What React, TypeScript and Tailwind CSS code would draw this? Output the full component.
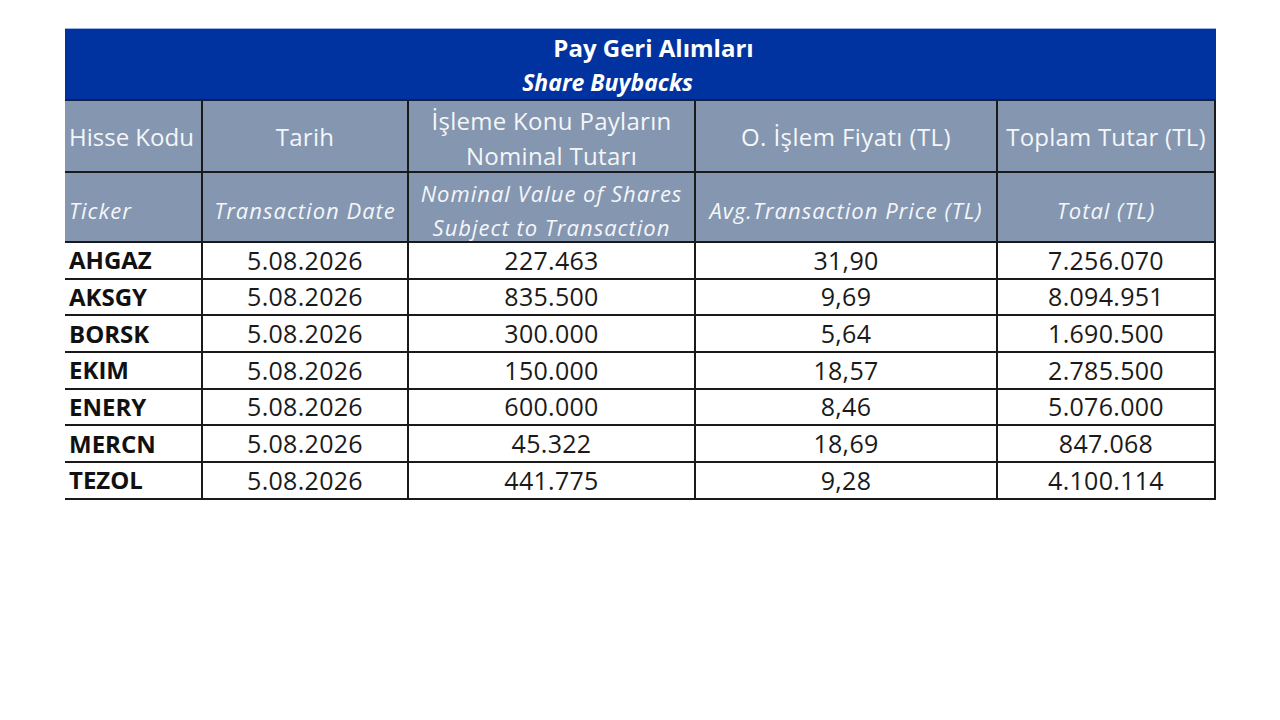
import React from "react";

const rows: [string, string, string, string, string][] = [
  ["AHGAZ", "5.08.2026", "227.463", "31,90", "7.256.070"],
  ["AKSGY", "5.08.2026", "835.500", "9,69", "8.094.951"],
  ["BORSK", "5.08.2026", "300.000", "5,64", "1.690.500"],
  ["EKIM", "5.08.2026", "150.000", "18,57", "2.785.500"],
  ["ENERY", "5.08.2026", "600.000", "8,46", "5.076.000"],
  ["MERCN", "5.08.2026", "45.322", "18,69", "847.068"],
  ["TEZOL", "5.08.2026", "441.775", "9,28", "4.100.114"],
];

const font = { fontFamily: "'Open Sans', 'Noto Sans', sans-serif" };

export default function App() {
  return (
    <div className="w-[1280px] h-[720px] bg-white pt-[28px] pl-[65px]" style={font}>
      <div className="w-[1151px]">
        <div className="h-[73px] bg-[#0033a0] border-t border-[#9db3e0] border-b-2 border-b-[#14204a] flex flex-col items-center text-white font-bold leading-none">
          <div className="mt-[7px] pl-[26px] text-[24px]">Pay Geri Alımları</div>
          <div className="mt-[11px] pr-[66px] italic text-[23px]">Share Buybacks</div>
        </div>
        <div className="grid grid-cols-[138px_206px_287px_302px_218px] text-[#f4f6f9]">
          <div className="h-[72px] bg-[#8496b0] border-r-2 border-b-2 border-[#1a1a1a] flex items-center pl-[4px] pt-[2px] text-[24px]">Hisse Kodu</div>
          <div className="h-[72px] bg-[#8496b0] border-r-2 border-b-2 border-[#1a1a1a] flex items-center justify-center pt-[2px] text-[24px] tracking-[0.3px]">Tarih</div>
          <div className="h-[72px] bg-[#8496b0] border-r-2 border-b-2 border-[#1a1a1a] flex flex-col items-center justify-center pt-[4px] text-[24px] tracking-[0.3px] leading-[35px]">
            <div>İşleme Konu Payların</div>
            <div>Nominal Tutarı</div>
          </div>
          <div className="h-[72px] bg-[#8496b0] border-r-2 border-b-2 border-[#1a1a1a] flex items-center justify-center pt-[2px] text-[24px] tracking-[0.4px]">O. İşlem Fiyatı (TL)</div>
          <div className="h-[72px] bg-[#8496b0] border-r-2 border-b-2 border-[#1a1a1a] flex items-center justify-center pt-[2px] text-[24px] tracking-[0.2px]">Toplam Tutar (TL)</div>

          <div className="h-[70px] bg-[#8496b0] border-r-2 border-b-2 border-[#1a1a1a] flex items-center pl-[4px] pt-[6px] text-[22px] italic tracking-[1px]">Ticker</div>
          <div className="h-[70px] bg-[#8496b0] border-r-2 border-b-2 border-[#1a1a1a] flex items-center justify-center pt-[6px] text-[22px] italic tracking-[1px]">Transaction Date</div>
          <div className="h-[70px] bg-[#8496b0] border-r-2 border-b-2 border-[#1a1a1a] flex flex-col items-center justify-center pt-[5px] text-[22px] italic tracking-[1px] leading-[34px]">
            <div>Nominal Value of Shares</div>
            <div>Subject to Transaction</div>
          </div>
          <div className="h-[70px] bg-[#8496b0] border-r-2 border-b-2 border-[#1a1a1a] flex items-center justify-center pt-[6px] text-[22px] italic tracking-[1px]">Avg.Transaction Price (TL)</div>
          <div className="h-[70px] bg-[#8496b0] border-r-2 border-b-2 border-[#1a1a1a] flex items-center justify-center pt-[6px] text-[22px] italic tracking-[1px]">Total (TL)</div>

          {rows.map((r) => (
            <React.Fragment key={r[0]}>
              <div className="h-[36.7px] border-r-2 border-b-2 border-[#1a1a1a] flex items-center pl-[4px] text-[24px] font-bold text-[#111]">{r[0]}</div>
              <div className="h-[36.7px] border-r-2 border-b-2 border-[#1a1a1a] flex items-center justify-center text-[25px] tracking-[0.3px] text-[#1a1a1a]">{r[1]}</div>
              <div className="h-[36.7px] border-r-2 border-b-2 border-[#1a1a1a] flex items-center justify-center text-[25px] tracking-[0.3px] text-[#1a1a1a]">{r[2]}</div>
              <div className="h-[36.7px] border-r-2 border-b-2 border-[#1a1a1a] flex items-center justify-center text-[25px] tracking-[0.3px] text-[#1a1a1a]">{r[3]}</div>
              <div className="h-[36.7px] border-r-2 border-b-2 border-[#1a1a1a] flex items-center justify-center text-[25px] tracking-[0.3px] text-[#1a1a1a]">{r[4]}</div>
            </React.Fragment>
          ))}
        </div>
      </div>
    </div>
  );
}
